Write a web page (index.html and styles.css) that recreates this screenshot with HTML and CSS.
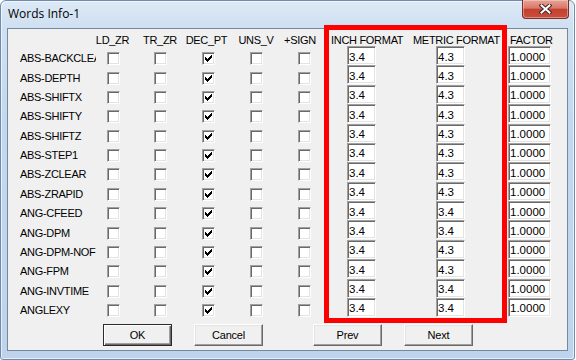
FILE: index.html
```html
<!DOCTYPE html>
<html lang="en">
<head>
  <meta charset="UTF-8">
  <title>Words Info-1</title>
  <link rel="stylesheet" href="styles.css">
</head>
<body>
  <div class="window">
    <div class="titlebar">
      <span class="title">Words Info-1</span>
      <button class="close" aria-label="Close">
        <svg width="13" height="10" viewBox="0 0 13 10">
          <path d="M2.5 1.5 L10.5 8.5 M10.5 1.5 L2.5 8.5" stroke="#3d2a28" stroke-width="4" stroke-linecap="square" fill="none"/>
          <path d="M2.5 1.5 L10.5 8.5 M10.5 1.5 L2.5 8.5" stroke="#fff" stroke-width="2" stroke-linecap="square" fill="none"/>
        </svg>
      </button>
    </div>

    <div class="client">
      <div class="words">
        <div class="row head">
          <span></span>
          <span class="col">LD_ZR</span>
          <span class="col">TR_ZR</span>
          <span class="col dec">DEC_PT</span>
          <span class="col">UNS_V</span>
          <span class="col sign">+SIGN</span>
          <span class="fmt inch">INCH FORMAT</span>
          <span class="fmt metric">METRIC FORMAT</span>
          <span class="fmt factor">FACTOR</span>
        </div>

        <div class="row">
          <span class="label">ABS-BACKCLEAR</span>
          <span class="cb"></span><span class="cb"></span><span class="cb on"></span><span class="cb"></span><span class="cb"></span>
          <input class="edit inch" value="3.4" readonly>
          <input class="edit metric" value="4.3" readonly>
          <input class="edit factor" value="1.0000" readonly>
        </div>
        <div class="row">
          <span class="label">ABS-DEPTH</span>
          <span class="cb"></span><span class="cb"></span><span class="cb on"></span><span class="cb"></span><span class="cb"></span>
          <input class="edit inch" value="3.4" readonly>
          <input class="edit metric" value="4.3" readonly>
          <input class="edit factor" value="1.0000" readonly>
        </div>
        <div class="row">
          <span class="label">ABS-SHIFTX</span>
          <span class="cb"></span><span class="cb"></span><span class="cb on"></span><span class="cb"></span><span class="cb"></span>
          <input class="edit inch" value="3.4" readonly>
          <input class="edit metric" value="4.3" readonly>
          <input class="edit factor" value="1.0000" readonly>
        </div>
        <div class="row">
          <span class="label">ABS-SHIFTY</span>
          <span class="cb"></span><span class="cb"></span><span class="cb on"></span><span class="cb"></span><span class="cb"></span>
          <input class="edit inch" value="3.4" readonly>
          <input class="edit metric" value="4.3" readonly>
          <input class="edit factor" value="1.0000" readonly>
        </div>
        <div class="row">
          <span class="label">ABS-SHIFTZ</span>
          <span class="cb"></span><span class="cb"></span><span class="cb on"></span><span class="cb"></span><span class="cb"></span>
          <input class="edit inch" value="3.4" readonly>
          <input class="edit metric" value="4.3" readonly>
          <input class="edit factor" value="1.0000" readonly>
        </div>
        <div class="row">
          <span class="label">ABS-STEP1</span>
          <span class="cb"></span><span class="cb"></span><span class="cb on"></span><span class="cb"></span><span class="cb"></span>
          <input class="edit inch" value="3.4" readonly>
          <input class="edit metric" value="4.3" readonly>
          <input class="edit factor" value="1.0000" readonly>
        </div>
        <div class="row">
          <span class="label">ABS-ZCLEAR</span>
          <span class="cb"></span><span class="cb"></span><span class="cb on"></span><span class="cb"></span><span class="cb"></span>
          <input class="edit inch" value="3.4" readonly>
          <input class="edit metric" value="4.3" readonly>
          <input class="edit factor" value="1.0000" readonly>
        </div>
        <div class="row">
          <span class="label">ABS-ZRAPID</span>
          <span class="cb"></span><span class="cb"></span><span class="cb on"></span><span class="cb"></span><span class="cb"></span>
          <input class="edit inch" value="3.4" readonly>
          <input class="edit metric" value="4.3" readonly>
          <input class="edit factor" value="1.0000" readonly>
        </div>
        <div class="row">
          <span class="label">ANG-CFEED</span>
          <span class="cb"></span><span class="cb"></span><span class="cb on"></span><span class="cb"></span><span class="cb"></span>
          <input class="edit inch" value="3.4" readonly>
          <input class="edit metric" value="3.4" readonly>
          <input class="edit factor" value="1.0000" readonly>
        </div>
        <div class="row">
          <span class="label">ANG-DPM</span>
          <span class="cb"></span><span class="cb"></span><span class="cb on"></span><span class="cb"></span><span class="cb"></span>
          <input class="edit inch" value="3.4" readonly>
          <input class="edit metric" value="3.4" readonly>
          <input class="edit factor" value="1.0000" readonly>
        </div>
        <div class="row">
          <span class="label">ANG-DPM-NOF</span>
          <span class="cb"></span><span class="cb"></span><span class="cb on"></span><span class="cb"></span><span class="cb"></span>
          <input class="edit inch" value="3.4" readonly>
          <input class="edit metric" value="4.3" readonly>
          <input class="edit factor" value="1.0000" readonly>
        </div>
        <div class="row">
          <span class="label">ANG-FPM</span>
          <span class="cb"></span><span class="cb"></span><span class="cb on"></span><span class="cb"></span><span class="cb"></span>
          <input class="edit inch" value="3.4" readonly>
          <input class="edit metric" value="4.3" readonly>
          <input class="edit factor" value="1.0000" readonly>
        </div>
        <div class="row">
          <span class="label">ANG-INVTIME</span>
          <span class="cb"></span><span class="cb"></span><span class="cb on"></span><span class="cb"></span><span class="cb"></span>
          <input class="edit inch" value="3.4" readonly>
          <input class="edit metric" value="3.4" readonly>
          <input class="edit factor" value="1.0000" readonly>
        </div>
        <div class="row">
          <span class="label">ANGLEXY</span>
          <span class="cb"></span><span class="cb"></span><span class="cb on"></span><span class="cb"></span><span class="cb"></span>
          <input class="edit inch" value="3.4" readonly>
          <input class="edit metric" value="3.4" readonly>
          <input class="edit factor" value="1.0000" readonly>
        </div>
      </div>

      <div class="buttons">
        <button class="btn default">OK</button>
        <button class="btn cancel">Cancel</button>
        <button class="btn prev">Prev</button>
        <button class="btn next">Next</button>
      </div>
    </div>

    <!-- red annotation box over the format columns -->
    <div class="mark"></div>
  </div>
</body>
</html>
```

FILE: styles.css
```css
* { margin: 0; padding: 0; box-sizing: border-box; }
html, body { height: 100%; }
body {
  background: #fff;
  font-family: 'Liberation Sans', Arial, sans-serif;
  font-size: 11px;
  letter-spacing: -0.3px;
  color: #000;
  overflow: hidden;
}

/* window frame (aero style) */
.window {
  position: relative;
  width: 575px;
  height: 360px;
  padding: 0 6px 8px;
  border: 1px solid #6f8cae;
  border-radius: 6px 6px 3px 3px;
  background: linear-gradient(to bottom, #dde9f6 0, #cfe0f2 26px, #c3d8ee 120px, #bed4ec 100%);
  box-shadow: inset 1px 1px 0 rgba(255, 255, 255, 0.6), inset -1px -1px 0 rgba(255, 255, 255, 0.6);
  display: flex;
  flex-direction: column;
}

.titlebar {
  height: 27px;
  display: flex;
  align-items: flex-start;
}
.title {
  font-family: 'Open Sans', 'Liberation Sans', sans-serif;
  font-size: 12px;
  letter-spacing: 0;
  line-height: 25px;
  padding-left: 1px;
}
.close {
  width: 47px;
  height: 19px;
  margin: -1px -1px 0 auto;
  border: 1px solid #7a2e26;
  border-top: none;
  border-radius: 0 0 4px 4px;
  background: linear-gradient(to bottom, #e7a596 0, #d9776a 45%, #c5402f 52%, #c94e3d 100%);
  box-shadow: inset 0 0 0 1px rgba(255, 220, 210, 0.45);
  display: flex;
  align-items: center;
  justify-content: center;
}

/* client area */
.client {
  flex: 1;
  background: #f0f0f0;
  border: 1px solid #74889e;
}

.words {
  display: grid;
  grid-template-columns: 81px 47px 48px 48px 48px 48px 84px 94px 50px;
  grid-template-rows: 20px repeat(14, 19.38px);
}
.row { display: contents; }

.head span {
  align-self: end;
  line-height: 13px;
  padding-bottom: 2px;
  white-space: nowrap;
}
.head .col { text-align: center; }
.head .dec { padding-right: 3px; }
.head .sign { padding-right: 8px; }
.head .inch { padding-left: 3px; }
.head .metric { padding-left: 1px; }
.head .factor { padding-left: 4px; }

.label {
  align-self: center;
  width: 88px;
  padding-left: 12px;
  line-height: 13px;
  white-space: nowrap;
  overflow: hidden;
}

/* sunken checkbox */
.cb {
  align-self: center;
  justify-self: start;
  margin-left: 18px;
  width: 13px;
  height: 13px;
  background: #fff;
  border: 1px solid;
  border-color: #a0a0a0 #fff #fff #a0a0a0;
  box-shadow: inset 1px 1px 0 #696969, inset -1px -1px 0 #e3e3e3;
}
.cb.on::after {
  content: '';
  display: block;
  width: 1px;
  height: 1px;
  margin: 2px 0 0 2px;
  box-shadow:
    6px 0 #000,
    5px 1px #000, 6px 1px #000,
    0 2px #000, 4px 2px #000, 5px 2px #000, 6px 2px #000,
    0 3px #000, 1px 3px #000, 3px 3px #000, 4px 3px #000, 5px 3px #000,
    0 4px #000, 1px 4px #000, 2px 4px #000, 3px 4px #000, 4px 4px #000,
    1px 5px #000, 2px 5px #000, 3px 5px #000,
    2px 6px #000;
}

/* sunken edit box */
.edit {
  align-self: start;
  justify-self: start;
  margin-top: -3px;
  width: 29px;
  height: 19px;
  padding: 2px 0 0 1px;
  font: inherit;
  font-size: 11.5px;
  letter-spacing: 0;
  color: #000;
  background: #fff;
  border: 1px solid;
  border-color: #a0a0a0 #fff #fff #a0a0a0;
  box-shadow: inset 1px 1px 0 #696969, inset -1px -1px 0 #e3e3e3;
  outline: none;
  appearance: none;
}
.edit.inch { margin-left: 19px; }
.edit.metric { margin-left: 24px; }
.edit.factor { margin-left: 2px; width: 43px; }

/* push buttons */
.buttons {
  display: flex;
  margin-top: 3.7px;
  padding-left: 95px;
}
.btn {
  width: 69px;
  height: 22px;
  font: inherit;
  letter-spacing: -0.2px;
  color: #000;
  background: #f0f0f0;
  border: 1px solid;
  border-color: #fff #696969 #696969 #fff;
  box-shadow: inset -1px -1px 0 #a0a0a0, inset 1px 1px 0 #e3e3e3;
  padding-top: 1px;
}
.btn.default {
  border-color: #2b2b2b;
  box-shadow: inset 1px 1px 0 #fff, inset -1px -1px 0 #696969, inset -2px -2px 0 #a0a0a0;
}
.btn.cancel { margin-left: 22px; }
.btn.prev { margin-left: 50px; }
.btn.next { margin-left: 22px; }

.mark {
  position: absolute;
  left: 323px;
  top: 24px;
  width: 183px;
  height: 298px;
  border: 5px solid #f00;
  pointer-events: none;
}
```
